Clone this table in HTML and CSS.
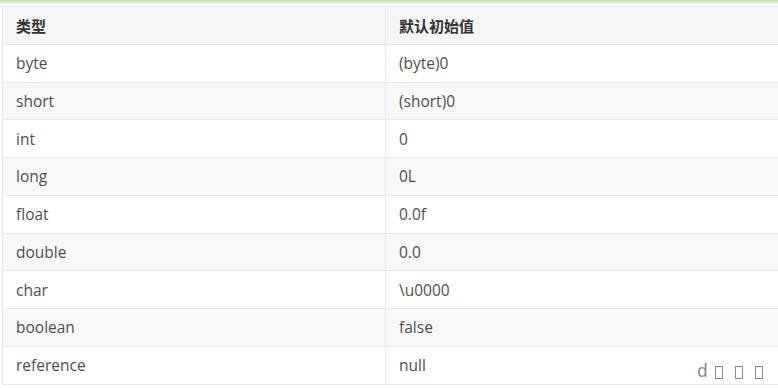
FILE: index.html
```html
<!DOCTYPE html>
<html>
<head>
<meta charset="utf-8">
<link rel="stylesheet" href="styles.css">
</head>
<body>
<div class="topline"></div>
<div class="wrap">
<table class="tbl">
  <thead>
    <tr><th class="c1">类型</th><th class="c2">默认初始值</th></tr>
  </thead>
  <tbody>
    <tr><td class="c1">byte</td><td class="c2">(byte)0</td></tr>
    <tr class="alt"><td class="c1">short</td><td class="c2">(short)0</td></tr>
    <tr><td class="c1">int</td><td class="c2">0</td></tr>
    <tr class="alt"><td class="c1">long</td><td class="c2">0L</td></tr>
    <tr><td class="c1">float</td><td class="c2">0.0f</td></tr>
    <tr class="alt"><td class="c1">double</td><td class="c2">0.0</td></tr>
    <tr><td class="c1">char</td><td class="c2">\u0000</td></tr>
    <tr class="alt"><td class="c1">boolean</td><td class="c2">false</td></tr>
    <tr><td class="c1">reference</td><td class="c2">null</td></tr>
  </tbody>
</table>
</div>
<div class="mark"><span class="d">d</span><span class="box"></span><span class="box"></span><span class="box"></span></div>
</body>
</html>
```
FILE: styles.css
```css
html, body {
  margin: 0;
  padding: 0;
  background: #ffffff;
  width: 778px;
  height: 388px;
  overflow: hidden;
}
body {
  font-family: "Open Sans", "Noto Sans CJK SC", sans-serif;
  color: #4f4f4f;
  position: relative;
}
.topline {
  height: 3px;
  background: linear-gradient(#b9e0a8, #e4f3dc);
}
.wrap {
  padding: 3px 0 0 2px;
}
.tbl {
  border-collapse: collapse;
  width: 776px;
  table-layout: fixed;
  font-size: 15.5px;
}
.tbl th, .tbl td {
  border: 1px solid #e8e8ea;
  height: 37.75px;
  padding: 0 0 0 13px;
  text-align: left;
  box-sizing: border-box;
}
.tbl .c1 {
  width: 383px;
}
.tbl .c2 {
  border-right: none;
}
.tbl th {
  background: #f6f6f7;
  font-weight: bold;
  color: #333;
  font-family: "Noto Sans CJK SC", sans-serif;
  font-size: 15px;
}
.tbl tr.alt td {
  background: #f8f8f9;
}
.mark {
  position: absolute;
  left: 697px;
  top: 361px;
  display: flex;
  align-items: center;
  color: #8a8a8a;
  font-family: "DejaVu Sans", sans-serif;
  font-size: 17px;
  line-height: 20px;
}
.mark .d {
  margin-right: 7px;
}
.mark .box {
  width: 8px;
  height: 13px;
  border: 1px solid #8a8a8a;
  box-sizing: border-box;
  margin-top: 3px;
  margin-right: 12px;
}
```
